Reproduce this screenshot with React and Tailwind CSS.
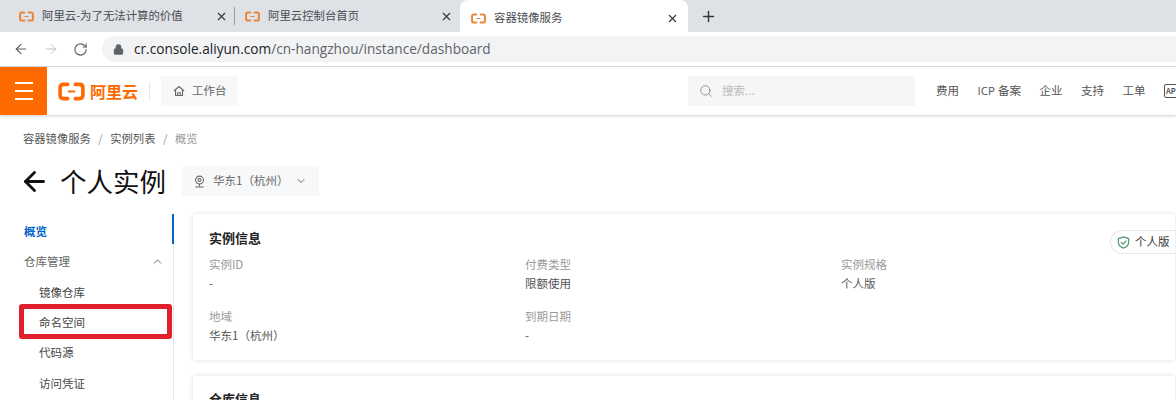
import React from "react";
import { ArrowLeft, ArrowRight, RotateCw, Lock, X, Plus, Search, ChevronDown, ChevronUp } from "lucide-react";

const sans = "font-['Noto_Sans_CJK_SC','Noto_Sans',sans-serif]";

function Bracket({ className }) {
  return (
    <svg viewBox="0 0 28 20" className={className} fill="none" stroke="currentColor" strokeLinecap="round" strokeLinejoin="round">
      <path d="M10 2.500H5.500Q2 2.500 2 6v8q0 3.500 3.500 3.500H10" strokeWidth="3.800" />
      <path d="M18 2.500h4.500Q26 2.500 26 6v8q0 3.500-3.500 3.500H18" strokeWidth="3.800" />
      <path d="M11 10h6" strokeWidth="2" />
    </svg>
  );
}

function HomeIcon({ className }) {
  return (
    <svg viewBox="0 0 14 14" className={className} fill="none" stroke="currentColor" strokeWidth="1.300" strokeLinejoin="round">
      <path d="M1 7 7 1.800 13 7" />
      <path d="M3 6v6.200h8V6" />
      <path d="M5.500 12.200V9h3v3.200" />
    </svg>
  );
}

function PinIcon({ className }) {
  return (
    <svg viewBox="0 0 14 14" className={className} fill="none" stroke="currentColor" strokeWidth="1.100">
      <circle cx="7" cy="5.500" r="4.300" />
      <circle cx="7" cy="5.500" r="1.600" />
      <path d="M7 9.800v2.200M2.500 13h9" />
    </svg>
  );
}

function ShieldIcon({ className }) {
  return (
    <svg viewBox="0 0 14 14" className={className} fill="none" stroke="currentColor" strokeWidth="1.300" strokeLinejoin="round" strokeLinecap="round">
      <path d="M7 1 12.500 2.800V7c0 3-2.500 5-5.500 6C4 12 1.500 10 1.500 7V2.800Z" />
      <path d="M4.500 6.800 6.400 8.700 9.700 5.300" />
    </svg>
  );
}

function Tab({ title, active, layoutClass, sep }) {
  return (
    <div className={`relative flex items-center shrink-0 ${layoutClass} ${active ? "h-[36px] bg-white rounded-t-lg z-10 -mb-1" : "h-8"}`}>
      <Bracket className="w-[15px] h-[11px] text-[#e8873c] shrink-0" />
      <span className="ml-[8px] text-[11.400px] text-[#4a4d52] whitespace-nowrap flex-1">{title}</span>
      <X size={13} strokeWidth={2} className="text-[#33363a] shrink-0" />
      {sep && <div className="absolute right-0 top-[7px] h-[18px] w-px bg-[#9aa0a6]" />}
    </div>
  );
}

function Field({ label, value }) {
  return (
    <div className="h-[52px]">
      <div className="h-[19px] leading-[19px] text-[11.500px] text-[#9a9a9a]">{label}</div>
      <div className="h-[19px] leading-[19px] text-[11.500px] text-[#555]">{value}</div>
    </div>
  );
}

function NavLink({ children, className = "" }) {
  return <span className={`text-[11.500px] text-[#555] whitespace-nowrap shrink-0 ${className}`}>{children}</span>;
}

function SideItem({ children, sub, active, boxed, trailing }) {
  const tone = active ? "font-bold text-[#0064c8]" : sub ? "text-[#444]" : "text-[#666]";
  return (
    <div className={`relative flex items-center justify-between h-[30.400px] pr-[9px] text-[11.500px] ${sub ? "pl-[39px]" : "pl-[24px]"} ${tone}`}>
      <span>{children}</span>
      {trailing}
      {boxed && <div className="absolute left-[19px] right-[1px] top-[-3.400px] bottom-[-1.200px] border-[5px] border-[#e0202c] rounded-[3px]" />}
    </div>
  );
}

export default function App() {
  return (
    <div className={`${sans} w-[1176px] h-[400px] overflow-hidden bg-white flex flex-col`}>
      {/* browser tabs */}
      <div className="h-8 shrink-0 bg-[#dee1e6] flex items-start pl-2">
        <Tab title="阿里云-为了无法计算的价值" layoutClass="w-[227px] pl-[11px] pr-[7px]" sep />
        <Tab title="阿里云控制台首页" layoutClass="w-[225px] pl-[10px] pr-[7px]" />
        <Tab title="容器镜像服务" layoutClass="w-[228px] pl-[11px] pr-[9px]" active />
        <Plus size={17} strokeWidth={2} className="ml-[12px] mt-[8px] text-[#33363a] shrink-0" />
      </div>

      {/* browser toolbar */}
      <div className="h-[35px] shrink-0 bg-white border-b border-[#dadce0] flex items-center">
        <ArrowLeft size={16} strokeWidth={1.800} className="ml-[13px] text-[#5f6368] shrink-0" />
        <ArrowRight size={16} strokeWidth={1.500} className="ml-[14px] text-[#bdc1c6] shrink-0" />
        <RotateCw size={15} strokeWidth={1.800} className="ml-[14px] text-[#5f6368] shrink-0" />
        <div className="ml-[14px] flex-1 h-[26px] rounded-l-full bg-[#f1f3f4] flex items-center pl-[11px]">
          <Lock size={11} strokeWidth={2.500} className="text-[#5f6368] fill-[#5f6368] shrink-0" />
          <span className="ml-[10px] font-['Open_Sans',sans-serif] text-[13.650px] text-[#5f6368] whitespace-nowrap">
            <span className="text-[#202124]">cr.console.aliyun.com</span>/cn-hangzhou/instance/dashboard
          </span>
        </div>
      </div>

      {/* console header */}
      <div className="h-[48px] shrink-0 bg-white shadow-[0_1px_3px_rgba(0,0,0,0.2)] flex items-center z-10 overflow-hidden">
        <div className="w-[47px] h-full bg-[#ff6a00] flex flex-col items-center justify-center gap-[6px] shrink-0">
          <div className="w-[18px] h-[2px] bg-[#fff]" />
          <div className="w-[18px] h-[2px] bg-[#fff]" />
          <div className="w-[18px] h-[2px] bg-[#fff]" />
        </div>
        <Bracket className="ml-[11px] w-[27px] h-[19px] text-[#ff6a00] shrink-0" />
        <span className="ml-[5px] text-[16px] leading-none font-bold text-[#ff6a00] whitespace-nowrap shrink-0">阿里云</span>
        <div className="ml-[11px] w-px h-[18px] bg-[#e5e5e5] shrink-0" />
        <div className="ml-[11px] w-[77px] h-[30px] bg-[#f7f8fa] flex items-center pl-[12px] shrink-0">
          <HomeIcon className="w-[12px] h-[12px] text-[#666] shrink-0" />
          <span className="ml-[7px] text-[11.500px] text-[#666]">工作台</span>
        </div>
        <div className="ml-[450px] w-[227px] h-[30px] bg-[#f5f6f7] flex items-center pl-[11px] shrink-0">
          <Search size={14} strokeWidth={1.500} className="text-[#888] shrink-0" />
          <span className="ml-[9px] text-[11.500px] text-[#bbb]">搜索...</span>
        </div>
        <div className="ml-[21px] flex items-center gap-[18.500px] shrink-0">
          <NavLink>费用</NavLink>
          <NavLink className="font-['Open_Sans','Noto_Sans_CJK_SC',sans-serif]">ICP 备案</NavLink>
          <NavLink>企业</NavLink>
          <NavLink>支持</NavLink>
          <NavLink>工单</NavLink>
          <div className="relative w-[14px] h-[14px] border border-[#555] rounded-[2px] flex items-center shrink-0">
            <span className="absolute left-[1px] bg-white text-[7.500px] leading-[8px] font-bold text-[#555]">API</span>
          </div>
        </div>
      </div>

      {/* page */}
      <div className="flex-1 min-h-0 flex flex-col overflow-hidden">
        <div className="h-[20px] mt-[13px] shrink-0 flex items-center pl-[23px] text-[11.300px] text-[#555]">
          <span>容器镜像服务</span>
          <span className="mx-[7.500px] text-[#999]">/</span>
          <span>实例列表</span>
          <span className="mx-[7.500px] text-[#999]">/</span>
          <span className="text-[#999]">概览</span>
        </div>

        <div className="h-[30px] mt-[18px] shrink-0 flex items-center pl-[19px]">
          <ArrowLeft size={31} strokeWidth={2.200} className="text-[#111] shrink-0" />
          <span className="ml-[10px] text-[26.500px] leading-none text-[#111] whitespace-nowrap">个人实例</span>
          <div className="ml-[16px] w-[137px] h-[30px] bg-[#f7f8fa] flex items-center pl-[11px] shrink-0">
            <PinIcon className="w-[13px] h-[13px] text-[#666] shrink-0" />
            <span className="ml-[7px] text-[11.500px] text-[#666] whitespace-nowrap">华东1（杭州）</span>
            <ChevronDown size={12} strokeWidth={1.800} className="ml-[7px] text-[#555] shrink-0" />
          </div>
        </div>

        <div className="flex-1 min-h-0 mt-[18px] flex">
          {/* sidebar */}
          <div className="relative w-[174px] shrink-0 border-r border-[#e3e5e8] pt-[2.200px]">
            <div className="absolute right-[-1px] top-0 w-[2px] h-[30px] bg-[#0064c8]" />
            <SideItem active>概览</SideItem>
            <SideItem trailing={<ChevronUp size={13} strokeWidth={1.600} className="text-[#555]" />}>仓库管理</SideItem>
            <SideItem sub>镜像仓库</SideItem>
            <SideItem sub boxed>命名空间</SideItem>
            <SideItem sub>代码源</SideItem>
            <SideItem sub>访问凭证</SideItem>
          </div>

          {/* cards */}
          <div className="flex-1 min-w-0 pl-[19px] pr-px flex flex-col gap-[16px]">
            <div className="relative h-[146px] shrink-0 bg-white shadow-[0_0_5px_rgba(0,0,0,0.13)] pl-[16px] pt-[14px]">
              <div className="h-[21px] leading-[19px] text-[13px] font-bold text-[#222]">实例信息</div>
              <div className="mt-[6px] grid grid-cols-[316px_316px_316px]">
                <Field label="实例ID" value="-" />
                <Field label="付费类型" value="限额使用" />
                <Field label="实例规格" value="个人版" />
                <Field label="地域" value="华东1（杭州）" />
                <Field label="到期日期" value="-" />
              </div>
              <div className="absolute right-0 top-[16px] w-[65px] h-[24px] rounded-l-full border border-r-0 border-[#e6e8e6] bg-white flex items-center pl-[6px]">
                <ShieldIcon className="w-[13px] h-[13px] text-[#4f9a70] shrink-0" />
                <span className="ml-[5px] text-[11.500px] text-[#333] whitespace-nowrap">个人版</span>
              </div>
            </div>
            <div className="h-[60px] shrink-0 bg-white shadow-[0_0_5px_rgba(0,0,0,0.13)] pl-[16px] pt-[12px]">
              <div className="h-[21px] leading-[21px] text-[13px] font-bold text-[#222]">仓库信息</div>
            </div>
          </div>
        </div>
      </div>
    </div>
  );
}
